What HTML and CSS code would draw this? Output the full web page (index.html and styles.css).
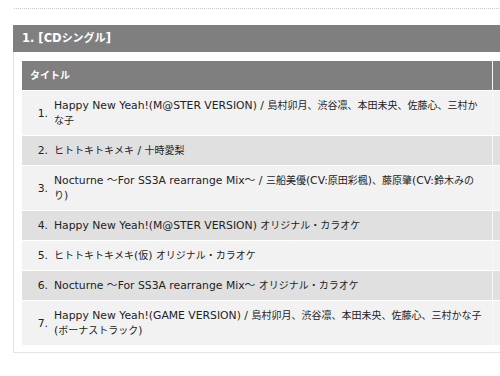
FILE: index.html
```html
<!DOCTYPE html>
<html lang="ja">
<head>
<meta charset="utf-8">
<link rel="stylesheet" href="styles.css">
</head>
<body>
<div class="page">
  <div class="rule"></div>
  <section class="box">
    <h2 class="box-head">1. [CD<span class="ja">シングル</span>]</h2>
    <div class="box-body">
      <table class="tracks">
        <colgroup>
          <col class="col-num">
          <col class="col-title">
          <col class="col-extra">
        </colgroup>
        <thead>
          <tr><th class="title-head" colspan="2"><span class="ja">タイトル</span></th><th class="extra"></th></tr>
        </thead>
        <tbody>
          <tr class="odd"><td class="num">1.</td><td class="title">Happy New Yeah!(M@STER VERSION) / <span class="ja">島村卯月、渋谷凛、本田未央、佐藤心、三村かな子</span></td><td class="extra"></td></tr>
          <tr class="even"><td class="num">2.</td><td class="title"><span class="ja">ヒトトキトキメキ</span> / <span class="ja">十時愛梨</span></td><td class="extra"></td></tr>
          <tr class="odd"><td class="num">3.</td><td class="title">Nocturne 〜For SS3A rearrange Mix〜 / <span class="ja">三船美優</span>(CV:<span class="ja">原田彩楓</span>)<span class="ja">、藤原肇</span>(CV:<span class="ja">鈴木みのり</span>)</td><td class="extra"></td></tr>
          <tr class="even"><td class="num">4.</td><td class="title">Happy New Yeah!(M@STER VERSION) <span class="ja">オリジナル・カラオケ</span></td><td class="extra"></td></tr>
          <tr class="odd"><td class="num">5.</td><td class="title"><span class="ja">ヒトトキトキメキ</span>(<span class="ja">仮</span>) <span class="ja">オリジナル・カラオケ</span></td><td class="extra"></td></tr>
          <tr class="even"><td class="num">6.</td><td class="title">Nocturne 〜For SS3A rearrange Mix〜 <span class="ja">オリジナル・カラオケ</span></td><td class="extra"></td></tr>
          <tr class="odd"><td class="num">7.</td><td class="title">Happy New Yeah!(GAME VERSION) / <span class="ja">島村卯月、渋谷凛、本田未央、佐藤心、三村かな子</span>(<span class="ja">ボーナストラック</span>)</td><td class="extra"></td></tr>
        </tbody>
      </table>
    </div>
  </section>
</div>
</body>
</html>
```

FILE: styles.css
```css
html, body {
  margin: 0;
  padding: 0;
  overflow: hidden;
  background: #fff;
}
body {
  font-family: "DejaVu Sans", "Noto Sans CJK JP", sans-serif;
  font-size: 10.8px;
  color: #222;
}
.ja {
  font-size: 10px;
}
.page {
  width: 560px;
  padding: 8px 0 0 13px;
}
.rule {
  margin-left: 1px;
  border-top: 1px dotted #c8c8c8;
  height: 0;
}
.box {
  margin-top: 16px;
}
.box-head {
  margin: 0;
  height: 27px;
  line-height: 27px;
  padding: 0 0 0 9px;
  background: #7f7f7f;
  color: #fff;
  font-size: 11.5px;
  font-weight: bold;
}
.box-head .ja {
  font-size: 11px;
}
.box-body {
  border: 1px solid #e4e4e4;
  border-top: none;
  padding: 9px 0 7px 8px;
}
.tracks {
  border-collapse: collapse;
  width: 530px;
  table-layout: fixed;
}
.col-num { width: 30px; }
.col-title { width: 440px; }
.col-extra { width: 60px; }
.tracks th,
.tracks td {
  padding: 7px 0;
  line-height: 15px;
  vertical-align: middle;
}
.tracks thead th {
  background: #7f7f7f;
  color: #fff;
  font-weight: bold;
  text-align: left;
  font-size: 11px;
}
.tracks .title-head {
  padding-left: 8px;
}
.tracks tbody td {
  border-top: 1px solid #fff;
}
.tracks .extra {
  border-left: 1px solid #f8f8f8;
}
.tracks .num {
  text-align: right;
  padding-right: 4px;
}
.tracks .title {
  padding-left: 2px;
  padding-right: 7px;
}
.odd td { background: #f2f2f2; }
.even td { background: #e0e0e0; }
```
